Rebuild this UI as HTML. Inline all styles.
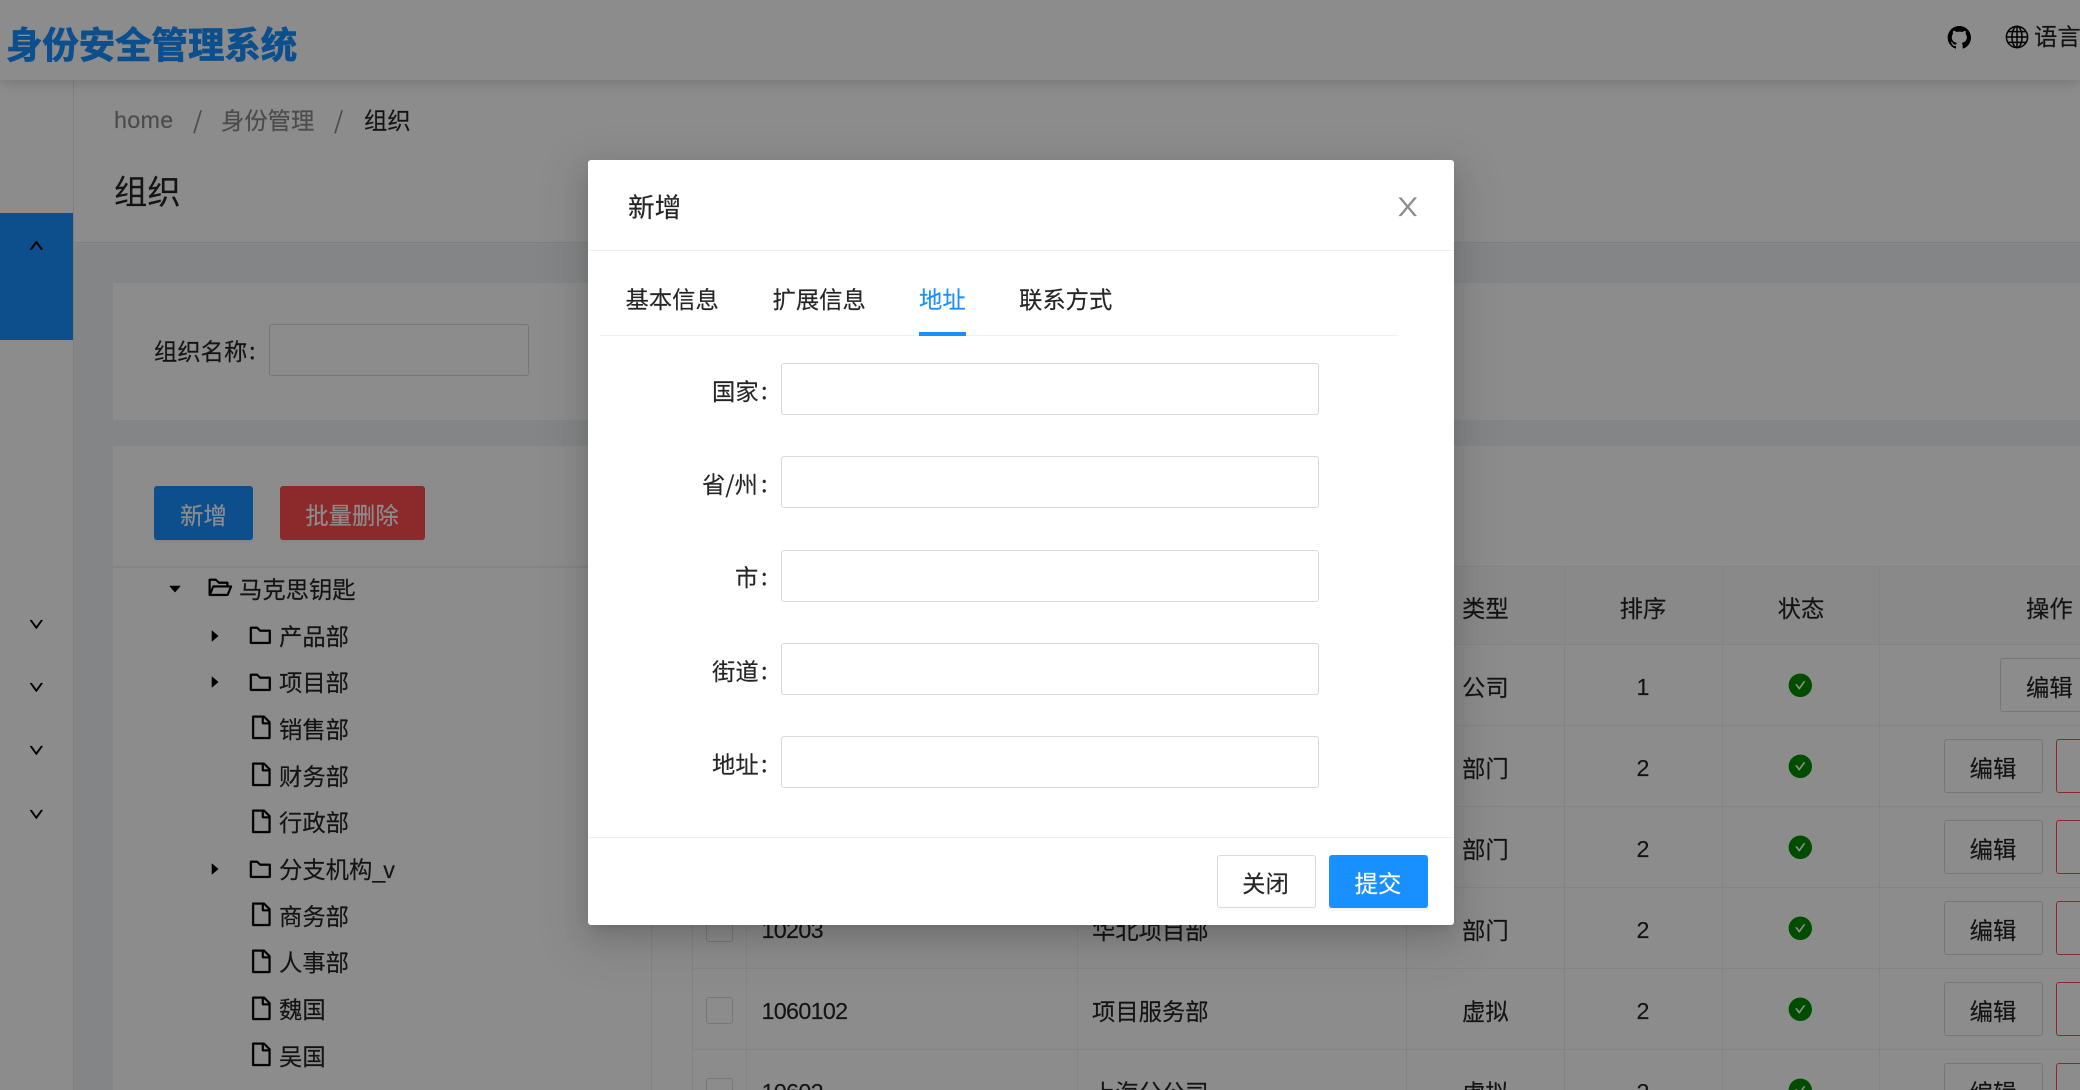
<!DOCTYPE html>
<html lang="zh-CN">
<head>
<meta charset="utf-8">
<title>组织</title>
<style>
html,body{margin:0;padding:0;width:2080px;height:1090px;overflow:hidden;background:#f0f2f5}
body{position:relative;font-family:"Noto Sans CJK SC","Liberation Sans",sans-serif;color:rgba(0,0,0,.85);font-size:23.33px}
div,span,svg{position:absolute;box-sizing:border-box}
.t{line-height:40px;height:40px;white-space:nowrap;-webkit-text-stroke:.15px currentColor}
.t span{position:static}
.l{font-family:"Liberation Sans",sans-serif}
.c{transform:translateX(-50%)}
.m{color:rgba(0,0,0,.45)}
.h{background:#f0f0f0;height:1px}
.v{background:#f0f0f0;width:1px;top:566px;height:524px}
.btn{border:1.67px solid #d9d9d9;border-radius:3px;height:54px;background:#fff;width:99px}
.dbtn{border:1.67px solid #ff4d4f;border-radius:3px;height:54px;width:99px;left:2056px}
.inp{left:781px;width:538px;height:52px;border:1.67px solid #d9d9d9;border-radius:3px;background:#fff}
.cb{left:706px;width:27px;height:27px;border:1.67px solid #d9d9d9;border-radius:3px;background:#fff}
.overlay{left:0;top:0;width:2080px;height:1090px;background:rgba(0,0,0,.45)}
.modal{left:588px;top:160px;width:866px;height:765px;background:#fff;border-radius:3px;box-shadow:0 5px 10px -7px rgba(0,0,0,.2),0 10px 27px rgba(0,0,0,.13),0 15px 47px 13px rgba(0,0,0,.08)}
.ic{stroke:#000;stroke-width:14}
.ch{stroke:#000;stroke-width:40}
</style>
</head>
<body>
<svg width="0" height="0" style="display:none">
<defs>
<path id="down" d="M884 256h-75c-5.1 0-9.9 2.5-12.9 6.6L512 654.2 227.9 262.6c-3-4.1-7.8-6.6-12.9-6.6h-75c-6.5 0-10.3 7.4-6.5 12.7l352.6 486.1c12.8 17.6 39 17.6 51.7 0l352.6-486.1c3.9-5.3.1-12.7-6.4-12.7z"/>
<path id="cr" d="M715.8 493.5L335 165.1c-14.2-12.2-35-1.2-35 18.5v656.8c0 19.7 20.8 30.7 35 18.5l380.8-328.4c10.9-9.4 10.9-27.6 0-37z"/>
<path id="fo" d="M880 298.4H521L403.7 186.2a8.15 8.15 0 0 0-5.5-2.2H144c-17.7 0-32 14.3-32 32v592c0 17.7 14.3 32 32 32h736c17.7 0 32-14.3 32-32V330.4c0-17.7-14.3-32-32-32zM840 768H184V256h188.5l119.6 114.4H840V768z"/>
<path id="fi" d="M854.6 288.6L639.4 73.4c-6-6-14.1-9.4-22.6-9.4H192c-17.7 0-32 14.3-32 32v832c0 17.7 14.3 32 32 32h640c17.7 0 32-14.3 32-32V311.3c0-8.5-3.4-16.7-9.4-22.7zM790.2 326H602V137.8L790.2 326zm1.8 562H232V136h302v216a42 42 0 0 0 42 42h216v494z"/>
<path id="ok" d="M512 64C264.6 64 64 264.6 64 512s200.6 448 448 448 448-200.6 448-448S759.4 64 512 64zm193.5 301.7l-210.6 292a31.8 31.8 0 0 1-51.7 0L318.5 484.9c-3.8-5.3 0-12.7 6.5-12.7h46.9c10.2 0 19.9 4.9 25.9 13.3l71.2 98.8 157.2-218c6-8.3 15.6-13.3 25.9-13.3H699c6.5 0 10.3 7.4 6.5 12.7z"/>
</defs>
</svg>

<!-- page header band -->
<div style="left:74px;top:80px;width:2006px;height:163px;background:#fff;border-bottom:1.67px solid #e8e8e8"></div>
<!-- sidebar -->
<div style="left:0;top:80px;width:74px;height:1010px;background:#fff;border-right:1.67px solid #e8e8e8"></div>
<div style="left:0;top:213px;width:73px;height:127px;background:#1890ff"></div>
<svg class="ch" style="left:28px;top:237px;transform:rotate(180deg)" width="16.67" height="16.67" viewBox="0 0 1024 1024"><use href="#down"/></svg>
<svg class="ch" style="left:28px;top:616px" width="16.67" height="16.67" viewBox="0 0 1024 1024"><use href="#down"/></svg>
<svg class="ch" style="left:28px;top:679px" width="16.67" height="16.67" viewBox="0 0 1024 1024"><use href="#down"/></svg>
<svg class="ch" style="left:28px;top:742px" width="16.67" height="16.67" viewBox="0 0 1024 1024"><use href="#down"/></svg>
<svg class="ch" style="left:28px;top:806px" width="16.67" height="16.67" viewBox="0 0 1024 1024"><use href="#down"/></svg>

<!-- top header -->
<div style="left:0;top:0;width:2080px;height:80px;background:#fff;box-shadow:0 3px 13px rgba(0,0,0,.15)"></div>
<div class="t" style="left:6px;top:22.5px;font-size:36.4px;font-weight:700;color:#1890ff;-webkit-text-stroke:.8px #1890ff">身份安全管理系统</div>
<svg style="left:1946px;top:24px" width="26.67" height="26.67" viewBox="0 0 1024 1024"><path d="M511.6 76.3C264.3 76.2 64 276.4 64 523.5 64 718.9 189.3 885 363.8 946c23.5 5.9 19.9-10.8 19.9-22.2v-77.5c-135.7 15.9-141.2-73.9-150.3-88.9C215 726 171.5 718 184.5 703c30.9-15.9 62.4 4 98.9 57.9 26.4 39.1 77.9 32.5 104 26 5.7-23.5 17.9-44.5 34.7-60.8-140.6-25.2-199.2-111-199.2-213 0-49.5 16.3-95 48.3-131.7-20.4-60.5 1.9-112.3 4.9-120 58.1-5.2 118.5 41.6 123.2 45.3 33-8.9 70.7-13.6 112.9-13.6 42.4 0 80.2 4.9 113.5 13.9 11.3-8.6 67.3-48.8 121.3-43.9 2.9 7.7 24.7 58.3 5.5 118 32.4 36.8 48.9 82.7 48.9 132.3 0 102.2-59 188.1-200 212.9a127.5 127.5 0 0 1 38.1 91v112.5c.8 9 0 17.9 15 17.9 177.1-59.7 304.6-227 304.6-424.1 0-247.2-200.4-447.3-447.5-447.3z"/></svg>
<svg style="left:2005px;top:25px" width="24" height="24" viewBox="0 0 24 24" fill="none" stroke="#000" stroke-width="1.5"><circle cx="12" cy="12" r="10.6"/><ellipse cx="12" cy="12" rx="5" ry="10.6"/><path d="M12 1.4v21.2M1.4 12h21.2M3 6.6h18M3 17.4h18"/></svg>
<div class="t" style="left:2034px;top:15px">语言</div>

<!-- breadcrumb + title -->
<div class="t m l" style="left:114px;top:100px;letter-spacing:.3px">home</div>
<div class="t m" style="left:193px;top:99px">/</div>
<div class="t m" style="left:221px;top:99px">身份管理</div>
<div class="t m" style="left:334px;top:99px">/</div>
<div class="t" style="left:364px;top:99px">组织</div>
<div class="t" style="left:114px;top:170px;font-size:33.33px">组织</div>

<!-- search card -->
<div style="left:113px;top:283px;width:1967px;height:137px;background:#fff"></div>
<div class="t" style="left:154px;top:330px">组织名称</div>
<div class="t" style="left:249px;top:329px">:</div>
<div style="left:269px;top:324px;width:260px;height:52px;border:1.67px solid #d9d9d9;border-radius:3px;background:#fff"></div>

<!-- main card -->
<div style="left:113px;top:446px;width:1967px;height:644px;background:#fff"></div>
<div style="left:154px;top:486px;width:99px;height:54px;background:#1890ff;border-radius:3px;box-shadow:0 3px 0 rgba(0,0,0,.03)"></div>
<div class="t c" style="left:203.5px;top:494px;color:#fff">新增</div>
<div style="left:280px;top:486px;width:145px;height:54px;background:#ff4d4f;border-radius:3px;box-shadow:0 3px 0 rgba(0,0,0,.03)"></div>
<div class="t c" style="left:352px;top:494px;color:#fff">批量删除</div>
<div class="h" style="left:113px;top:566px;width:1967px;height:1.67px"></div>
<div class="v" style="left:651px"></div>

<!-- tree -->
<svg style="left:166.5px;top:580.5px" width="16" height="16" viewBox="0 0 1024 1024"><path d="M840.4 300H183.6c-19.7 0-30.7 20.8-18.5 35l328.4 380.8c9.4 10.9 27.5 10.9 37 0L858.9 335c12.2-14.2 1.2-35-18.5-35z"/></svg>
<svg class="ic" style="left:207px;top:574px" width="26.67" height="26.67" viewBox="0 0 1024 1024"><path d="M928 444H820V330.4c0-17.7-14.3-32-32-32H473L355.7 186.2a8.15 8.15 0 0 0-5.5-2.2H96c-17.7 0-32 14.3-32 32v592c0 17.7 14.3 32 32 32h698c13 0 24.8-7.9 29.7-20l134-332c1.5-3.8 2.3-7.9 2.3-12 0-17.7-14.3-32-32-32zM136 256h188.5l119.6 114.4H748V444H238c-13 0-24.8 7.9-29.7 20L136 643.2V256zm635.3 512H159l103.3-256h612.4L771.3 768z"/></svg>
<div class="t" style="left:239px;top:568px">马克思钥匙</div>

<svg style="left:206.5px;top:627.5px" width="16" height="16" viewBox="0 0 1024 1024"><use href="#cr"/></svg>
<svg class="ic" style="left:247px;top:622px" width="26.67" height="26.67" viewBox="0 0 1024 1024"><use href="#fo"/></svg>
<div class="t" style="left:279px;top:615px">产品部</div>

<svg style="left:206.5px;top:674px" width="16" height="16" viewBox="0 0 1024 1024"><use href="#cr"/></svg>
<svg class="ic" style="left:247px;top:668.5px" width="26.67" height="26.67" viewBox="0 0 1024 1024"><use href="#fo"/></svg>
<div class="t" style="left:279px;top:661px">项目部</div>

<svg class="ic" style="left:247.5px;top:714px" width="26.67" height="26.67" viewBox="0 0 1024 1024"><use href="#fi"/></svg>
<div class="t" style="left:279px;top:708px">销售部</div>

<svg class="ic" style="left:247.5px;top:761px" width="26.67" height="26.67" viewBox="0 0 1024 1024"><use href="#fi"/></svg>
<div class="t" style="left:279px;top:755px">财务部</div>

<svg class="ic" style="left:247.5px;top:807.5px" width="26.67" height="26.67" viewBox="0 0 1024 1024"><use href="#fi"/></svg>
<div class="t" style="left:279px;top:801px">行政部</div>

<svg style="left:206.5px;top:861px" width="16" height="16" viewBox="0 0 1024 1024"><use href="#cr"/></svg>
<svg class="ic" style="left:247px;top:855.5px" width="26.67" height="26.67" viewBox="0 0 1024 1024"><use href="#fo"/></svg>
<div class="t" style="left:279px;top:848px">分支机构<span class="l" style="letter-spacing:-2px">_v</span></div>

<svg class="ic" style="left:247.5px;top:901px" width="26.67" height="26.67" viewBox="0 0 1024 1024"><use href="#fi"/></svg>
<div class="t" style="left:279px;top:895px">商务部</div>

<svg class="ic" style="left:247.5px;top:947.5px" width="26.67" height="26.67" viewBox="0 0 1024 1024"><use href="#fi"/></svg>
<div class="t" style="left:279px;top:941px">人事部</div>

<svg class="ic" style="left:247.5px;top:994.5px" width="26.67" height="26.67" viewBox="0 0 1024 1024"><use href="#fi"/></svg>
<div class="t" style="left:279px;top:988px">魏国</div>

<svg class="ic" style="left:247.5px;top:1041px" width="26.67" height="26.67" viewBox="0 0 1024 1024"><use href="#fi"/></svg>
<div class="t" style="left:279px;top:1035px">吴国</div>

<!-- table -->
<div style="left:692px;top:567px;width:1388px;height:77px;background:#fafafa"></div>
<div class="h" style="left:692px;top:644px;width:1388px"></div>
<div class="h" style="left:692px;top:725px;width:1388px"></div>
<div class="h" style="left:692px;top:806px;width:1388px"></div>
<div class="h" style="left:692px;top:887px;width:1388px"></div>
<div class="h" style="left:692px;top:968px;width:1388px"></div>
<div class="h" style="left:692px;top:1049px;width:1388px"></div>
<div class="v" style="left:692px"></div>
<div class="v" style="left:746px"></div>
<div class="v" style="left:1077px"></div>
<div class="v" style="left:1406px"></div>
<div class="v" style="left:1564px"></div>
<div class="v" style="left:1722px"></div>
<div class="v" style="left:1879px"></div>

<div class="t" style="left:1462px;top:587px">类型</div>
<div class="t c" style="left:1643px;top:587px">排序</div>
<div class="t c" style="left:1801px;top:587px">状态</div>
<div class="t" style="left:2026px;top:587px">操作</div>

<div class="cb" style="top:915px"></div>
<div class="cb" style="top:997px"></div>
<div class="cb" style="top:1078px"></div>
<div class="t l" style="left:761.5px;top:910px;letter-spacing:-.7px">10203</div>
<div class="t l" style="left:761.5px;top:991px;letter-spacing:-.7px">1060102</div>
<div class="t l" style="left:761.5px;top:1072px;letter-spacing:-.7px">10602</div>
<div class="t" style="left:1092px;top:909px">华北项目部</div>
<div class="t" style="left:1092px;top:990px">项目服务部</div>
<div class="t" style="left:1092px;top:1071px">上海分公司</div>

<div class="t" style="left:1462px;top:666px">公司</div>
<div class="t" style="left:1462px;top:747px">部门</div>
<div class="t" style="left:1462px;top:828px">部门</div>
<div class="t" style="left:1462px;top:909px">部门</div>
<div class="t" style="left:1462px;top:990px">虚拟</div>
<div class="t" style="left:1462px;top:1071px">虚拟</div>

<div class="t c l" style="left:1643px;top:667px">1</div>
<div class="t c l" style="left:1643px;top:748px">2</div>
<div class="t c l" style="left:1643px;top:829px">2</div>
<div class="t c l" style="left:1643px;top:910px">2</div>
<div class="t c l" style="left:1643px;top:991px">2</div>
<div class="t c l" style="left:1643px;top:1072px">2</div>

<svg style="left:1787px;top:672px" width="26.67" height="26.67" viewBox="0 0 1024 1024" fill="#008c00"><use href="#ok"/></svg>
<svg style="left:1787px;top:753px" width="26.67" height="26.67" viewBox="0 0 1024 1024" fill="#008c00"><use href="#ok"/></svg>
<svg style="left:1787px;top:834px" width="26.67" height="26.67" viewBox="0 0 1024 1024" fill="#008c00"><use href="#ok"/></svg>
<svg style="left:1787px;top:915px" width="26.67" height="26.67" viewBox="0 0 1024 1024" fill="#008c00"><use href="#ok"/></svg>
<svg style="left:1787px;top:996px" width="26.67" height="26.67" viewBox="0 0 1024 1024" fill="#008c00"><use href="#ok"/></svg>
<svg style="left:1787px;top:1077px" width="26.67" height="26.67" viewBox="0 0 1024 1024" fill="#008c00"><use href="#ok"/></svg>

<div class="btn" style="left:2000px;top:658px"></div><div class="t" style="left:2026px;top:666px">编辑</div>
<div class="btn" style="left:1943.5px;top:739px"></div><div class="t c" style="left:1993px;top:747px">编辑</div><div class="dbtn" style="top:739px"></div>
<div class="btn" style="left:1943.5px;top:820px"></div><div class="t c" style="left:1993px;top:828px">编辑</div><div class="dbtn" style="top:820px"></div>
<div class="btn" style="left:1943.5px;top:901px"></div><div class="t c" style="left:1993px;top:909px">编辑</div><div class="dbtn" style="top:901px"></div>
<div class="btn" style="left:1943.5px;top:982px"></div><div class="t c" style="left:1993px;top:990px">编辑</div><div class="dbtn" style="top:982px"></div>
<div class="btn" style="left:1943.5px;top:1063px"></div><div class="t c" style="left:1993px;top:1071px">编辑</div><div class="dbtn" style="top:1063px"></div>

<!-- overlay -->
<div class="overlay"></div>

<!-- modal -->
<div class="modal"></div>
<div class="t" style="left:628px;top:186px;font-size:26.67px">新增</div>
<svg style="left:1392.5px;top:192px" width="29.5" height="29.5" viewBox="0 0 1024 1024" fill="rgba(0,0,0,.45)"><path d="M563.8 512l262.5-312.9c4.4-5.2.7-13.1-6.1-13.1h-79.8c-4.7 0-9.2 2.1-12.3 5.7L511.6 449.8 295.1 191.7c-3-3.6-7.5-5.7-12.3-5.7H203c-6.8 0-10.5 7.9-6.1 13.1L459.4 512 196.9 824.9A7.95 7.95 0 0 0 203 838h79.8c4.7 0 9.2-2.1 12.3-5.7l216.5-258.1 216.5 258.1c3 3.6 7.5 5.7 12.3 5.7h79.8c6.8 0 10.5-7.9 6.1-13.1L563.8 512z"/></svg>
<div class="h" style="left:588px;top:250px;width:866px"></div>

<div class="t" style="left:625.5px;top:278px">基本信息</div>
<div class="t" style="left:772.5px;top:278px">扩展信息</div>
<div class="t" style="left:919px;top:278px;color:#1890ff">地址</div>
<div class="t" style="left:1019px;top:278px">联系方式</div>
<div class="h" style="left:600px;top:335px;width:799px"></div>
<div style="left:919px;top:332px;width:47px;height:4px;background:#1890ff"></div>

<div class="inp" style="top:363px"></div>
<div class="inp" style="top:456px"></div>
<div class="inp" style="top:550px"></div>
<div class="inp" style="top:643px"></div>
<div class="inp" style="top:736px"></div>

<div class="t" style="left:712px;top:370px">国家</div><div class="t" style="left:761px;top:369px">:</div>
<div class="t" style="left:702px;top:463px">省/州</div><div class="t" style="left:761px;top:462px">:</div>
<div class="t" style="left:735px;top:556px">市</div><div class="t" style="left:761px;top:555px">:</div>
<div class="t" style="left:712px;top:650px">街道</div><div class="t" style="left:761px;top:649px">:</div>
<div class="t" style="left:712px;top:743px">地址</div><div class="t" style="left:761px;top:742px">:</div>

<div class="h" style="left:588px;top:837px;width:866px"></div>
<div style="left:1216.5px;top:855px;width:99px;height:53px;border:1.67px solid #d9d9d9;border-radius:3px;background:#fff;box-shadow:0 3px 0 rgba(0,0,0,.015)"></div>
<div class="t c" style="left:1265.5px;top:862px">关闭</div>
<div style="left:1329px;top:855px;width:99px;height:53px;background:#1890ff;border-radius:3px;box-shadow:0 3px 0 rgba(0,0,0,.045)"></div>
<div class="t c" style="left:1378px;top:862px;color:#fff">提交</div>
</body>
</html>
